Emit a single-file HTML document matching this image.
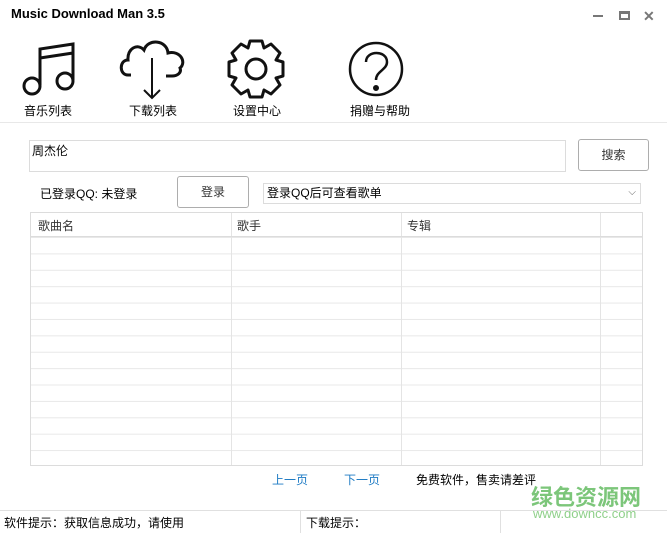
<!DOCTYPE html>
<html><head><meta charset="utf-8"><style>
*{margin:0;padding:0;box-sizing:border-box}
body{width:667px;height:533px;background:#fff;position:relative;overflow:hidden;font-family:"Liberation Sans","Noto Sans CJK SC",sans-serif;font-size:12px;color:#000}
.a{position:absolute}
.lbl{font-size:12px;text-align:center;width:80px}
.btn{position:absolute;border:1px solid #adadad;border-radius:3px;background:#fff;text-align:center;color:#333}
.tbl{position:absolute;left:30px;top:212px;width:613px;height:254px;border:1px solid #dcdcdc;
background-image:linear-gradient(#e8e8e8 1px,transparent 1px);background-size:100% 16.4px;background-position:0 24px}
.hdr{position:absolute;left:0;top:0;width:100%;height:24px;background:#fff;border-bottom:1px solid #dcdcdc}
.vl{position:absolute;top:0;bottom:0;width:1px;background:#e4e4e4}
</style></head><body>
<div class="a" style="left:11px;top:6px;font-weight:bold;font-size:13px">Music Download Man 3.5</div>
<div class="a" style="left:593px;top:15px;width:10px;height:2px;background:#777"></div>
<div class="a" style="left:619px;top:11px;width:11px;height:9px;border:2px solid #777;border-top-width:3px"></div>
<div class="a" style="left:643px;top:8px;color:#777;font-size:14px;font-weight:bold">✕</div>

<svg class="a" style="left:0;top:35px" width="420" height="70" viewBox="0 0 420 70" fill="none" stroke="#111" stroke-width="3">
<path d="M40 50V14L73 9V45M40 23L73 18"/>
<circle cx="32" cy="51" r="8"/><circle cx="65" cy="46" r="8"/>
<path d="M131 40H128C119 40 119 25 128 25C127 13 138 8 144 15C148 3 167 5 168 18C180 15 187 27 180 33C182 38 177 41 172 41H166"/>
<path d="M152 23V63M144 55L152 63L160 55" stroke-width="2"/>
<path d="M250 6L262 6L264 13L271 9L280 18L276 25L283 27L283 41L276 43L280 50L271 59L264 55L262 62L250 62L248 55L241 59L232 50L236 43L229 41L229 27L236 25L232 18L241 9L248 13Z" stroke-linejoin="round"/>
<circle cx="256" cy="34" r="10"/>
<circle cx="376" cy="34" r="26" stroke-width="2.5"/>
<path d="M366 27C366 15 387 15 387 27C387 35 376 36 376 45" stroke-width="2.5"/>
<circle cx="376" cy="53" r="1.5" fill="#111"/>
</svg>
<div class="a lbl" style="left:8px;top:102px">音乐列表</div>
<div class="a lbl" style="left:113px;top:102px">下载列表</div>
<div class="a lbl" style="left:217px;top:102px">设置中心</div>
<div class="a lbl" style="left:340px;top:102px">捐赠与帮助</div>
<div class="a" style="left:0;top:122px;width:667px;height:1px;background:#e8e8e8"></div>

<div class="a" style="left:29px;top:140px;width:537px;height:32px;border:1px solid #dcdcdc;padding:1px 2px">周杰伦</div>
<div class="btn" style="left:578px;top:139px;width:71px;height:32px;line-height:30px">搜索</div>
<div class="a" style="left:40px;top:185px">已登录QQ: 未登录</div>
<div class="btn" style="left:177px;top:176px;width:72px;height:32px;line-height:30px">登录</div>
<div class="a" style="left:263px;top:183px;width:378px;height:21px;border:1px solid #dcdcdc;padding:1px 3px;line-height:17px">登录QQ后可查看歌单<span style="position:absolute;right:4px;top:0;color:#666;font-size:10px">⌵</span></div>

<div class="tbl">
<div class="vl" style="left:200px"></div><div class="vl" style="left:370px"></div><div class="vl" style="left:569px"></div>
<div class="hdr">
<span class="a" style="left:7px;top:4px;color:#333">歌曲名</span>
<span class="a" style="left:206px;top:4px;color:#333">歌手</span>
<span class="a" style="left:376px;top:4px;color:#333">专辑</span>
<div class="vl" style="left:200px"></div><div class="vl" style="left:370px"></div><div class="vl" style="left:569px"></div>
</div></div>

<div class="a" style="left:272px;top:471px;color:#1e7bc4">上一页</div>
<div class="a" style="left:344px;top:471px;color:#1e7bc4">下一页</div>
<div class="a" style="left:416px;top:471px">免费软件，售卖请差评</div>
<div class="a" style="left:531px;top:480px;color:#7cc67a;font-size:22px;font-weight:bold;letter-spacing:0px">绿色资源网</div>
<div class="a" style="left:533px;top:506px;color:#8fd08a;font-size:13px">www.downcc.com</div>

<div class="a" style="left:0;top:510px;width:667px;height:1px;background:#e0e0e0"></div>
<div class="a" style="left:300px;top:511px;width:1px;height:22px;background:#e0e0e0"></div>
<div class="a" style="left:500px;top:511px;width:1px;height:22px;background:#e0e0e0"></div>
<div class="a" style="left:4px;top:514px">软件提示：获取信息成功，请使用</div>
<div class="a" style="left:306px;top:514px">下载提示：</div>
</body></html>
